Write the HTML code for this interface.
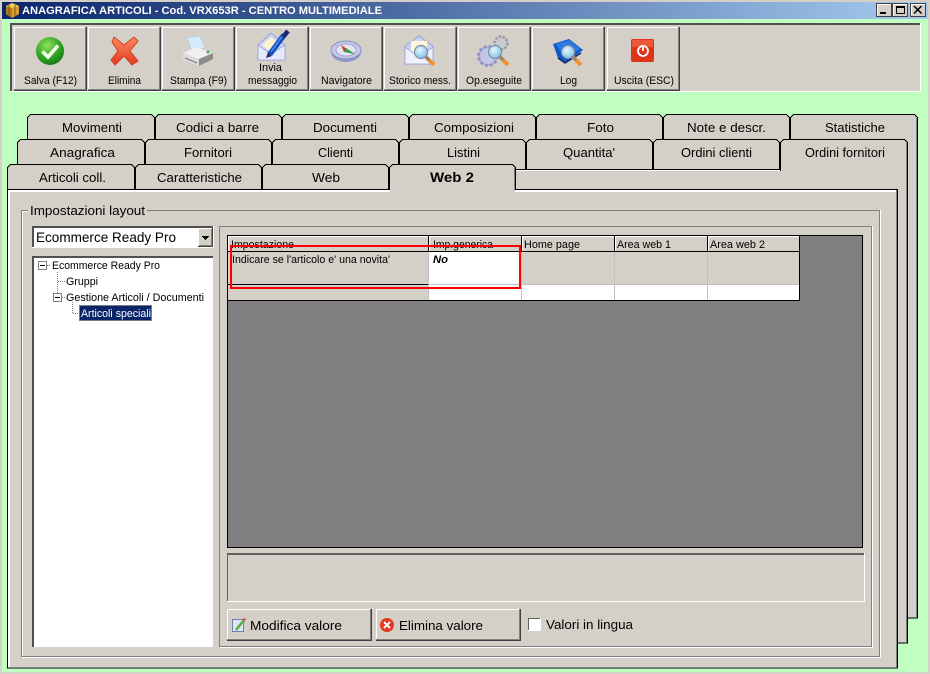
<!DOCTYPE html>
<html><head><meta charset="utf-8"><title>Anagrafica articoli</title>
<style>
html,body{margin:0;padding:0;background:#c0ffc0;width:930px;height:674px;overflow:hidden}
svg{display:block}
text{font-family:"Liberation Sans",sans-serif;fill:#000}
.s{font-size:11px}
.m{font-size:13px}
.c{shape-rendering:crispEdges}
</style></head><body>
<svg xmlns="http://www.w3.org/2000/svg" width="930" height="674" viewBox="0 0 930 674">
<defs>
<linearGradient id="tb" x1="0" x2="1" y1="0" y2="0"><stop offset="0" stop-color="#0a246a"/><stop offset="1" stop-color="#a6caf0"/></linearGradient>
<radialGradient id="gr" cx=".4" cy=".3" r=".8"><stop offset="0" stop-color="#8fe05a"/><stop offset=".6" stop-color="#2ca020"/><stop offset="1" stop-color="#0d6d12"/></radialGradient>
<linearGradient id="rd" x1="0" x2="0" y1="0" y2="1"><stop offset="0" stop-color="#ff8a60"/><stop offset="1" stop-color="#e03a20"/></linearGradient>
<radialGradient id="gl" cx=".4" cy=".35" r=".7"><stop offset="0" stop-color="#e6f6fc"/><stop offset="1" stop-color="#7cc0e0"/></radialGradient>
<path id="t" d="M.5 40V3.500L3.500 .5H123.500L126.500 3.500V40"/>
<path id="w" d="M.5 40V3.500L3.500 .5H124.500L127.500 3.500V40"/>
<g id="mag"><path d="M4 4L13 13" stroke="#f09030" stroke-width="4" fill="none"/><path d="M5 5L8 8" stroke="#888" stroke-width="3" fill="none"/><circle r="6.500" fill="url(#gl)" stroke="#7e8cb0" stroke-width="1.200"/></g>
</defs>

<!-- window -->
<rect width="930" height="674" fill="#d4d0c8"/>
<rect x="2" y="2" width="926" height="670" fill="#c0ffc0" class="c"/>
<rect x="2" y="2" width="926" height="17" fill="url(#tb)" class="c"/>
<g>
<path d="M6 6L12 3L19 6V14L12 18L6 14Z" fill="#d8a030"/><path d="M12 8V18L6 14V6Z" fill="#b07c18"/><path d="M6 6L12 3L19 6L12 8Z" fill="#f0cc60"/><path d="M9 5V15M15 5V16" stroke="#7a5510" stroke-width="1"/>
</g>
<text x="22" y="14" textLength="360" lengthAdjust="spacingAndGlyphs" style="font-size:11px;font-weight:bold;fill:#fff">ANAGRAFICA ARTICOLI - Cod. VRX653R - CENTRO MULTIMEDIALE</text>
<g class="c">
<g fill="#d4d0c8" stroke="#404040"><rect x="876.500" y="3.500" width="15" height="13"/><rect x="892.500" y="3.500" width="15" height="13"/><rect x="910.500" y="3.500" width="15" height="13"/></g>
<g stroke="#fff" fill="none"><path d="M877.500 15V4.500H891M893.500 15V4.500H907M911.500 15V4.500H925"/></g>
<rect x="880" y="12" width="6" height="2" fill="#000"/>
<path d="M896.500 6.500H904.500V13.500H896.500Z M896 7.500H905" fill="none" stroke="#000"/>
</g>
<path d="M914 6L921.500 13.500M921.500 6L914 13.500" stroke="#000" stroke-width="1.500"/>

<!-- toolbar -->
<g class="c">
<rect x="10" y="23" width="911" height="69" fill="#fff"/>
<rect x="10" y="23" width="910" height="68" fill="#505050"/>
<rect x="12" y="25" width="908" height="66" fill="#d4d0c8"/>
</g>
<g class="c" fill="#d4d0c8">
<path d="M14 27h73v64h-73z" fill="#404040"/><path d="M14 27h72v63h-72z" fill="#808080"/><path d="M14 27h71v62h-71z" fill="#fff"/><rect x="15" y="28" width="70" height="61"/>
<path d="M88 27h73v64h-73z" fill="#404040"/><path d="M88 27h72v63h-72z" fill="#808080"/><path d="M88 27h71v62h-71z" fill="#fff"/><rect x="89" y="28" width="70" height="61"/>
<path d="M162 27h73v64h-73z" fill="#404040"/><path d="M162 27h72v63h-72z" fill="#808080"/><path d="M162 27h71v62h-71z" fill="#fff"/><rect x="163" y="28" width="70" height="61"/>
<path d="M236 27h73v64h-73z" fill="#404040"/><path d="M236 27h72v63h-72z" fill="#808080"/><path d="M236 27h71v62h-71z" fill="#fff"/><rect x="237" y="28" width="70" height="61"/>
<path d="M310 27h73v64h-73z" fill="#404040"/><path d="M310 27h72v63h-72z" fill="#808080"/><path d="M310 27h71v62h-71z" fill="#fff"/><rect x="311" y="28" width="70" height="61"/>
<path d="M384 27h73v64h-73z" fill="#404040"/><path d="M384 27h72v63h-72z" fill="#808080"/><path d="M384 27h71v62h-71z" fill="#fff"/><rect x="385" y="28" width="70" height="61"/>
<path d="M458 27h73v64h-73z" fill="#404040"/><path d="M458 27h72v63h-72z" fill="#808080"/><path d="M458 27h71v62h-71z" fill="#fff"/><rect x="459" y="28" width="70" height="61"/>
<path d="M532 27h73v64h-73z" fill="#404040"/><path d="M532 27h72v63h-72z" fill="#808080"/><path d="M532 27h71v62h-71z" fill="#fff"/><rect x="533" y="28" width="70" height="61"/>
<path d="M607 27h73v64h-73z" fill="#404040"/><path d="M607 27h72v63h-72z" fill="#808080"/><path d="M607 27h71v62h-71z" fill="#fff"/><rect x="608" y="28" width="70" height="61"/>
</g>
<g>
<text class="s" x="24" y="84" textLength="53" lengthAdjust="spacingAndGlyphs">Salva (F12)</text>
<text class="s" x="108" y="84" textLength="33" lengthAdjust="spacingAndGlyphs">Elimina</text>
<text class="s" x="170" y="84" textLength="57" lengthAdjust="spacingAndGlyphs">Stampa (F9)</text>
<text class="s" x="259" y="71" textLength="23" lengthAdjust="spacingAndGlyphs">Invia</text>
<text class="s" x="248" y="84" textLength="49" lengthAdjust="spacingAndGlyphs">messaggio</text>
<text class="s" x="321" y="84" textLength="51" lengthAdjust="spacingAndGlyphs">Navigatore</text>
<text class="s" x="389" y="84" textLength="62" lengthAdjust="spacingAndGlyphs">Storico mess.</text>
<text class="s" x="466" y="84" textLength="56" lengthAdjust="spacingAndGlyphs">Op.eseguite</text>
<text class="s" x="560" y="84" textLength="17" lengthAdjust="spacingAndGlyphs">Log</text>
<text class="s" x="614" y="84" textLength="60" lengthAdjust="spacingAndGlyphs">Uscita (ESC)</text>
</g>

<!-- toolbar icons -->
<circle cx="50" cy="51" r="14" fill="url(#gr)"/>
<path d="M42.500 51.500L48 57L58 45.500" fill="none" stroke="#f4fff0" stroke-width="3.600"/>
<path d="M114 37L124 45L134 37L138 41L130 51L138 61L132 65L124 56L115 65L111 60L118 51L112 42Z" fill="url(#rd)" stroke="#d04020" stroke-width="1"/>
<!-- printer -->
<path d="M187 38L200 36L205 48L192 50Z" fill="#d4ecfa" stroke="#b0c8d8" stroke-width=".6"/>
<path d="M183 53L196 47L213 53L199 59Z" fill="#f0f0f0"/>
<path d="M183 53L199 59V66L183 60Z" fill="#dcdcdc"/>
<path d="M199 59L213 53V59L199 66Z" fill="#8c8c8c"/>
<path d="M185 58L197 63" stroke="#777" stroke-width="1"/>
<circle cx="208" cy="52" r="1.500" fill="#40b040"/>
<!-- invia -->
<path d="M258 45L271 33L285 45V60H258Z" fill="#cdd1f4" stroke="#9aa2dc" stroke-width="1"/>
<path d="M262 45L271 37L281 45L271 52Z" fill="#fff4d0"/>
<path d="M258 45L271 54L285 45V60H258Z" fill="#e6e8fb" stroke="#9aa2dc" stroke-width=".8"/>
<path d="M284 35L270 54" stroke="#1450c0" stroke-width="5.500"/>
<path d="M283 35L271 52" stroke="#4c90e8" stroke-width="1.500"/>
<path d="M288 31L283 37" stroke="#182c70" stroke-width="4.500"/>
<path d="M268 52L266 58L272 56Z" fill="#203060"/>
<!-- navigatore -->
<ellipse cx="346" cy="52" rx="15" ry="10" fill="#9498c8"/>
<ellipse cx="346" cy="50" rx="15" ry="9" fill="#c4c6e8" stroke="#8084b8" stroke-width=".8"/>
<ellipse cx="346" cy="50" rx="10" ry="6" fill="#e4e4f4" stroke="#9a9cc8" stroke-width=".8"/>
<path d="M341 45L347 49L344 52Z" fill="#d83020"/><path d="M346 48L355 54L344 52Z" fill="#30a040"/>
<!-- storico -->
<path d="M405 46L419 36L433 46V64H405Z" fill="#cdd1f4" stroke="#9aa2dc" stroke-width="1"/>
<rect x="411" y="41" width="16" height="13" fill="#fff8d8"/>
<path d="M405 47L419 57L433 47V64H405Z" fill="#eef0fc" stroke="#9aa2dc" stroke-width=".8"/>
<use href="#mag" x="421" y="52"/>
<!-- op -->
<circle cx="501" cy="43" r="6.500" fill="#c4c4cc" stroke="#9a9aa8" stroke-width="2.500" stroke-dasharray="2.500 1.500"/>
<circle cx="501" cy="43" r="5" fill="#cacad2"/>
<circle cx="488" cy="56" r="9.500" fill="#a8aad8" stroke="#9294c4" stroke-width="3" stroke-dasharray="3 2"/>
<circle cx="488" cy="56" r="8" fill="#c4c6e8"/>
<use href="#mag" x="495" y="52"/>
<!-- log -->
<path d="M553 44L569 39L583 50L565 63L558 58Z" fill="#0e58c8"/>
<path d="M556 44L569 40L580 49L565 59Z" fill="#2a7ae0"/>
<path d="M558 58L565 63L581 53" stroke="#182860" stroke-width="1.500" fill="none"/>
<use href="#mag" x="568" y="52"/>
<!-- uscita -->
<rect x="631" y="39" width="23" height="23" rx="2" fill="#e03418"/>
<rect x="632" y="40" width="21" height="7" rx="1" fill="#f47050" opacity=".6"/>
<circle cx="643" cy="51" r="5" fill="none" stroke="#fff" stroke-width="1.800"/>
<path d="M643 45.500V51" stroke="#fff" stroke-width="1.800"/>

<!-- back row -->
<g class="c">
<g fill="#d4d0c8" stroke="#000">
<rect x="27.500" y="139.500" width="890" height="478.500"/>
<use href="#w" x="27" y="114"/>
<use href="#t" x="155" y="114"/>
<use href="#t" x="282" y="114"/>
<use href="#t" x="409" y="114"/>
<use href="#t" x="536" y="114"/>
<use href="#t" x="663" y="114"/>
<use href="#w" x="790" y="114"/>
</g>
<rect x="916" y="118" width="1" height="499" fill="#808080"/>
<!-- middle row -->
<g fill="#d4d0c8" stroke="#000">
<rect x="17.500" y="169.500" width="890" height="473.500"/>
</g>
<rect x="18" y="170" width="888" height="1" fill="#fff"/>
<g fill="#d4d0c8" stroke="#000">
<path d="M17.500 170V142.500L20.500 139.500H141.500L144.500 142.500V170Z"/>
<path d="M145.500 169.500V142.500L148.500 139.500H268.500L271.500 142.500V169.500Z"/>
<path d="M272.500 169.500V142.500L275.500 139.500H395.500L398.500 142.500V169.500Z"/>
<path d="M399.500 169.500V142.500L402.500 139.500H522.500L525.500 142.500V169.500Z"/>
<path d="M526.500 169.500V142.500L529.500 139.500H649.500L652.500 142.500V169.500Z"/>
<path d="M653.500 169.500V142.500L656.500 139.500H776.500L779.500 142.500V169.500Z"/>
<path d="M780.500 171V142.500L783.500 139.500H904.500L907.500 142.500V171" />
</g>
<rect x="781" y="169" width="126" height="3" fill="#d4d0c8"/>
<rect x="906" y="143" width="1" height="499" fill="#808080"/>
<rect x="907" y="143" width="1" height="500" fill="#000"/>
<rect x="653" y="170" width="127" height="1" fill="#fff"/>
<!-- front row -->
<g fill="#d4d0c8" stroke="#000">
<rect x="7.500" y="189.500" width="890" height="478.500"/>
</g>
<rect x="8" y="190" width="888" height="2" fill="#fff"/>
<rect x="8" y="190" width="2" height="477" fill="#fff"/>
<rect x="896" y="190" width="1" height="478" fill="#808080"/>
<rect x="8" y="667" width="889" height="1" fill="#808080"/>
<g fill="#d4d0c8" stroke="#000">
<path d="M7.500 189.500V167.500L10.500 164.500H131.500L134.500 167.500V189.500Z"/>
<path d="M135.500 189.500V167.500L138.500 164.500H258.500L261.500 167.500V189.500Z"/>
<path d="M262.500 189.500V167.500L265.500 164.500H385.500L388.500 167.500V189.500Z"/>
<path d="M389.500 192V167.500L392.500 164.500H512.500L515.500 167.500V189.500"/>
</g>
<rect x="390" y="188" width="125" height="4" fill="#d4d0c8"/>
<rect x="514" y="168" width="1" height="22" fill="#808080"/>
<rect x="389" y="190" width="1" height="2" fill="#fff"/>
</g>

<!-- tab labels -->
<g>
<text class="m" x="62" y="132" textLength="60" lengthAdjust="spacingAndGlyphs">Movimenti</text>
<text class="m" x="176" y="132" textLength="83" lengthAdjust="spacingAndGlyphs">Codici a barre</text>
<text class="m" x="313" y="132" textLength="64" lengthAdjust="spacingAndGlyphs">Documenti</text>
<text class="m" x="434" y="132" textLength="80" lengthAdjust="spacingAndGlyphs">Composizioni</text>
<text class="m" x="587" y="132" textLength="27" lengthAdjust="spacingAndGlyphs">Foto</text>
<text class="m" x="687" y="132" textLength="79" lengthAdjust="spacingAndGlyphs">Note e descr.</text>
<text class="m" x="825" y="132" textLength="60" lengthAdjust="spacingAndGlyphs">Statistiche</text>
<text class="m" x="50" y="157" textLength="65" lengthAdjust="spacingAndGlyphs">Anagrafica</text>
<text class="m" x="184" y="157" textLength="48" lengthAdjust="spacingAndGlyphs">Fornitori</text>
<text class="m" x="318" y="157" textLength="35" lengthAdjust="spacingAndGlyphs">Clienti</text>
<text class="m" x="447" y="157" textLength="33" lengthAdjust="spacingAndGlyphs">Listini</text>
<text class="m" x="563" y="157" textLength="52" lengthAdjust="spacingAndGlyphs">Quantita'</text>
<text class="m" x="681" y="157" textLength="71" lengthAdjust="spacingAndGlyphs">Ordini clienti</text>
<text class="m" x="805" y="157" textLength="80" lengthAdjust="spacingAndGlyphs">Ordini fornitori</text>
<text class="m" x="39" y="182" textLength="67" lengthAdjust="spacingAndGlyphs">Articoli coll.</text>
<text class="m" x="157" y="182" textLength="85" lengthAdjust="spacingAndGlyphs">Caratteristiche</text>
<text class="m" x="312" y="182" textLength="28" lengthAdjust="spacingAndGlyphs">Web</text>
<text class="m" x="430" y="182" textLength="44" lengthAdjust="spacingAndGlyphs" style="font-weight:bold;font-size:14px">Web 2</text>
</g>

<!-- group box -->
<g class="c" fill="none">
<path d="M28 210.500H21.500V656.500H879.500V210.500H147" stroke="#808080"/>
<path d="M28 211.500H22.500V655.500M22 657.500H880.500V210" stroke="#fff"/>
</g>
<text class="m" x="30" y="215" textLength="115" lengthAdjust="spacingAndGlyphs">Impostazioni layout</text>

<!-- inner panel -->
<g class="c">
<path d="M219.500 647V226.500H872" fill="none" stroke="#808080"/>
<path d="M220 646.500H871.500V226" fill="none" stroke="#808080"/>
<path d="M220 647.500H872.500V226" fill="none" stroke="#fff"/>
<!-- combo -->
<rect x="32" y="226" width="182" height="22" fill="#fff"/>
<rect x="32" y="226" width="181" height="21" fill="#505050"/>
<rect x="34" y="228" width="179" height="19" fill="#fff"/>
<rect x="198" y="228" width="15" height="19" fill="#404040"/>
<rect x="198" y="228" width="14" height="18" fill="#fff"/>
<rect x="199" y="229" width="13" height="17" fill="#808080"/>
<rect x="199" y="229" width="12" height="16" fill="#d4d0c8"/>
<path d="M202 236h7v1h-1v1h-1v1h-1v1h-1v-1h-1v-1h-1v-1h-1z" fill="#000"/>
<!-- tree -->
<rect x="32" y="256" width="182" height="392" fill="#d4d0c8"/>
<rect x="32" y="256" width="181" height="391" fill="#505050"/>
<rect x="34" y="258" width="179" height="389" fill="#fff"/>
<rect x="79" y="305" width="73" height="16" fill="#0a246a"/>
<rect x="79.500" y="305.500" width="72" height="15" fill="none" stroke="#e0d8a0" stroke-dasharray="1 1"/>
<g stroke="#808080" stroke-dasharray="1 1" fill="none">
<path d="M47 265.500h4M57.500 272v21M58 281.500h7M62 297.500h3M72.500 302v11M73 313.500h6"/>
</g>
<path d="M38.500 261.500h8v8h-8zM53.500 293.500h8v8h-8z" fill="#fff" stroke="#808080"/>
<path d="M40 265.500h5M55 297.500h5" stroke="#000"/>
</g>
<text x="36" y="242" textLength="140" lengthAdjust="spacingAndGlyphs" style="font-size:14px">Ecommerce Ready Pro</text>
<text class="s" x="52" y="269" textLength="108" lengthAdjust="spacingAndGlyphs">Ecommerce Ready Pro</text>
<text class="s" x="66" y="285" textLength="32" lengthAdjust="spacingAndGlyphs">Gruppi</text>
<text class="s" x="66" y="301" textLength="138" lengthAdjust="spacingAndGlyphs">Gestione Articoli / Documenti</text>
<text class="s" x="81" y="317" textLength="70" lengthAdjust="spacingAndGlyphs" style="fill:#fff">Articoli speciali</text>

<!-- grid -->
<g class="c">
<rect x="227" y="235" width="636" height="313" fill="#000"/>
<rect x="228" y="236" width="634" height="311" fill="#808080"/>
<rect x="228" y="236" width="571" height="15" fill="#d4d0c8"/>
<rect x="228" y="236" width="571" height="1" fill="#fff"/>
<rect x="228" y="251" width="571" height="1" fill="#000"/>
<path d="M428.500 236v16M521.500 236v16M614.500 236v16M707.500 236v16" stroke="#000"/>
<path d="M429.500 237v14M522.500 237v14M615.500 237v14M708.500 237v14M228.500 237v14" stroke="#fff"/>
<rect x="228" y="252" width="200" height="32" fill="#d4d0c8"/>
<rect x="228" y="284" width="200" height="1" fill="#000"/>
<rect x="228" y="285" width="200" height="15" fill="#d4d0c8"/>
<rect x="429" y="252" width="370" height="48" fill="#fff"/>
<rect x="522" y="252" width="277" height="32" fill="#d4d0c8"/>
<rect x="428" y="252" width="1" height="48" fill="#c0c0c0"/>
<rect x="521" y="252" width="1" height="48" fill="#c0c0c0"/>
<rect x="614" y="252" width="1" height="48" fill="#c0c0c0"/>
<rect x="707" y="252" width="1" height="48" fill="#c0c0c0"/>
<rect x="429" y="284" width="370" height="1" fill="#c0c0c0"/>
<rect x="799" y="235" width="1" height="66" fill="#000"/>
<rect x="228" y="300" width="572" height="1" fill="#000"/>
</g>
<text class="s" x="231" y="248" textLength="63" lengthAdjust="spacingAndGlyphs">Impostazione</text>
<text class="s" x="433" y="248" textLength="60" lengthAdjust="spacingAndGlyphs">Imp.generica</text>
<text class="s" x="524" y="248" textLength="56" lengthAdjust="spacingAndGlyphs">Home page</text>
<text class="s" x="617" y="248" textLength="54" lengthAdjust="spacingAndGlyphs">Area web 1</text>
<text class="s" x="710" y="248" textLength="55" lengthAdjust="spacingAndGlyphs">Area web 2</text>
<text class="s" x="232" y="263" textLength="158" lengthAdjust="spacingAndGlyphs">Indicare se l'articolo e' una novita'</text>
<text class="s" x="433" y="263" textLength="15" lengthAdjust="spacingAndGlyphs" style="font-style:italic;font-weight:bold">No</text>
<rect x="231" y="246" width="289" height="42" fill="none" stroke="#ff0000" stroke-width="2" class="c"/>

<!-- message box -->
<g class="c">
<rect x="227" y="553" width="638" height="49" fill="#fff"/>
<rect x="227" y="553" width="637" height="48" fill="#606060"/>
<rect x="228" y="555" width="636" height="46" fill="#d4d0c8"/>
<!-- buttons -->
<rect x="227" y="609" width="145" height="32" fill="#404040"/>
<rect x="227" y="609" width="144" height="31" fill="#808080"/>
<rect x="227" y="609" width="143" height="30" fill="#fff"/>
<rect x="228" y="610" width="142" height="29" fill="#d4d0c8"/>
<rect x="376" y="609" width="145" height="32" fill="#404040"/>
<rect x="376" y="609" width="144" height="31" fill="#808080"/>
<rect x="376" y="609" width="143" height="30" fill="#fff"/>
<rect x="377" y="610" width="142" height="29" fill="#d4d0c8"/>
<!-- check -->
<rect x="528" y="618" width="13" height="13" fill="#fff"/>
<rect x="528" y="618" width="12" height="12" fill="#606060"/>
<rect x="529" y="619" width="11" height="11" fill="#fff"/>
</g>
<rect x="232.500" y="619.500" width="11" height="12" fill="#dfe6f6" stroke="#6a80b0"/>
<path d="M236 630L244 620" stroke="#58b040" stroke-width="2.600"/>
<path d="M243.500 620.500L245 618.500" stroke="#e05030" stroke-width="2.600"/>
<circle cx="387" cy="625" r="7" fill="#e03a20"/>
<path d="M384 622L390 628M390 622L384 628" stroke="#fff" stroke-width="2"/>
<text class="m" x="250" y="630" textLength="92" lengthAdjust="spacingAndGlyphs">Modifica valore</text>
<text class="m" x="399" y="630" textLength="84" lengthAdjust="spacingAndGlyphs">Elimina valore</text>
<text class="m" x="546" y="629" textLength="87" lengthAdjust="spacingAndGlyphs">Valori in lingua</text>
</svg>
</body></html>
